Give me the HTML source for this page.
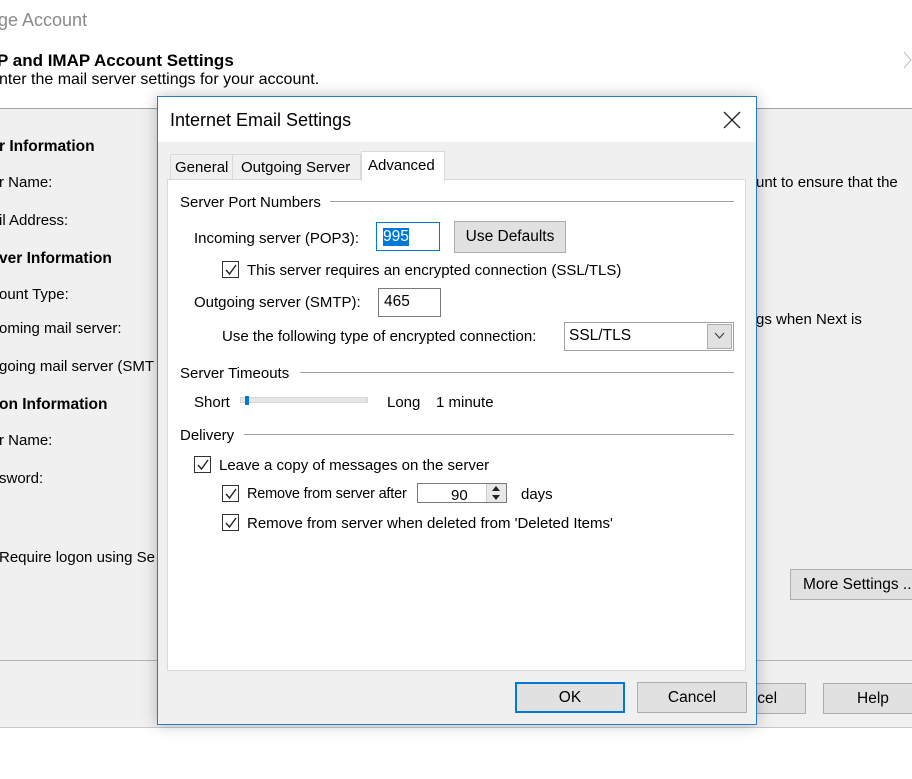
<!DOCTYPE html>
<html><head><meta charset="utf-8"><style>
*{margin:0;padding:0;box-sizing:border-box}
body{width:912px;height:779px;overflow:hidden;background:#fff;font-family:"Liberation Sans",sans-serif;font-size:15px;color:#000;position:relative}
.a{position:absolute;white-space:nowrap}
.b{font-weight:bold}
.btn{position:absolute;background:#e1e1e1;border:1px solid #adadad;text-align:center;font-size:15.5px}
.cb{position:absolute;width:17px;height:17px;border:1px solid #333;background:#fff}
.cb svg{position:absolute;left:1px;top:1px}
.field{position:absolute;background:#fff;border:1px solid #7a7a7a}
.sep{position:absolute;height:1px;background:#a0a0a0}
</style></head><body>
<div class="a" style="left:-2px;top:10px;font-size:18px;color:#8a8a8a">ge Account</div>
<div class="a b" style="left:-3px;top:51px;font-size:17px">P and IMAP Account Settings</div>
<div class="a" style="left:-1px;top:71px;font-size:16px">nter the mail server settings for your account.</div>
<svg class="a" style="left:903px;top:50px" width="9" height="20"><path d="M1 2L8 10L1 18" stroke="#bbb" fill="none"/></svg>
<div style="position:absolute;left:0;top:108px;width:912px;height:620px;background:#f0f0f0;border-top:1px solid #a0a0a0;border-bottom:1px solid #c8c8c8"></div>
<div class="sep" style="left:0;top:660px;width:912px;background:#b4b4b4"></div>
<div class="a b" style="left:-1px;top:138px;font-size:15.5px">r Information</div>
<div class="a" style="left:-1px;top:174px">r Name:</div>
<div class="a" style="left:-1px;top:212px">il Address:</div>
<div class="a b" style="left:-1px;top:250px;font-size:15.5px">ver Information</div>
<div class="a" style="left:-1px;top:286px">ount Type:</div>
<div class="a" style="left:-1px;top:320px">oming mail server:</div>
<div class="a" style="left:-1px;top:358px">going mail server (SMT</div>
<div class="a b" style="left:-1px;top:396px;font-size:15.5px">on Information</div>
<div class="a" style="left:-1px;top:432px">r Name:</div>
<div class="a" style="left:-1px;top:470px">sword:</div>
<div class="a" style="left:-1px;top:549px">Require logon using Se</div>
<div class="a" style="left:756px;top:174px">unt to ensure that the</div>
<div class="a" style="left:756px;top:311px">gs when Next is</div>
<div class="btn" style="left:790px;top:569px;width:130px;height:31px;line-height:29px;text-align:left;padding-left:12px">More Settings ...</div>
<div class="btn" style="left:700px;top:683px;width:106px;height:31px;line-height:29px">Cancel</div>
<div class="btn" style="left:823px;top:683px;width:100px;height:31px;line-height:29px">Help</div>

<div style="position:absolute;left:157px;top:96px;width:600px;height:629px;background:#f0f0f0;border:1px solid #2b79c2;box-shadow:0 0 14px rgba(0,0,0,.25)">
 <div style="position:absolute;left:0;top:0;width:598px;height:45px;background:#fff"></div>
 <div class="a" style="left:12px;top:13px;font-size:18px">Internet Email Settings</div>
 <svg class="a" style="left:565px;top:14px" width="18" height="18"><path d="M1 1L17 17M17 1L1 17" stroke="#222" stroke-width="1.3"/></svg>
 <div class="a" style="left:12px;top:57px;width:63px;height:27px;border:1px solid #d9d9d9;border-bottom:none;background:#f0f0f0"></div>
 <div class="a" style="left:75px;top:57px;width:128px;height:27px;border:1px solid #d9d9d9;border-left:none;border-bottom:none;background:#f0f0f0"></div>
 <div class="a" style="left:17px;top:62px;font-size:15px">General</div>
 <div class="a" style="left:83px;top:62px;font-size:15px">Outgoing Server</div>
 <div style="position:absolute;left:9px;top:82px;width:579px;height:492px;background:#fff;border:1px solid #d9d9d9"></div>
 <div class="a" style="left:203px;top:54px;width:84px;height:30px;background:#fff;border:1px solid #d9d9d9;border-bottom:none"></div>
 <div class="a" style="left:210px;top:60px;font-size:15px">Advanced</div>

 <div class="a" style="left:22px;top:97px">Server Port Numbers</div>
 <div class="sep" style="left:172px;top:104px;width:404px"></div>
 <div class="a" style="left:36px;top:133px">Incoming server (POP3):</div>
 <div class="field" style="left:218px;top:125px;width:64px;height:29px;border:1px solid #0078d7"></div>
 <div class="a" style="left:225px;top:131px;background:#0078d7;color:#fff;font-size:15.5px;line-height:18px">995</div>
 <div class="btn" style="left:296px;top:124px;width:112px;height:32px;line-height:30px">Use Defaults</div>
 <div class="cb" style="left:64px;top:164px"><svg width="14" height="14"><path d="M2 7L5.5 11L12 2" stroke="#222" stroke-width="1.4" fill="none"/></svg></div>
 <div class="a" style="left:89px;top:165px">This server requires an encrypted connection (SSL/TLS)</div>
 <div class="a" style="left:36px;top:197px">Outgoing server (SMTP):</div>
 <div class="field" style="left:220px;top:191px;width:63px;height:29px"></div>
 <div class="a" style="left:226px;top:196px;font-size:15.5px">465</div>
 <div class="a" style="left:64px;top:231px">Use the following type of encrypted connection:</div>
 <div class="field" style="left:406px;top:225px;width:170px;height:29px;border-color:#a0a0a0"></div>
 <div class="a" style="left:411px;top:230px;font-size:15.5px">SSL/TLS</div>
 <div class="a" style="left:549px;top:227px;width:25px;height:25px;background:#e1e1e1;border:1px solid #adadad"></div>
 <svg class="a" style="left:556px;top:235px" width="11" height="8"><path d="M1 1L5.5 6L10 1" stroke="#333" fill="none"/></svg>

 <div class="a" style="left:22px;top:268px">Server Timeouts</div>
 <div class="sep" style="left:142px;top:275px;width:434px"></div>
 <div class="a" style="left:36px;top:297px">Short</div>
 <div class="a" style="left:82px;top:300px;width:128px;height:6px;background:#e6e6e6;border:1px solid #d6d6d6"></div>
 <div class="a" style="left:87px;top:299px;width:4px;height:9px;background:#0078d7"></div>
 <div class="a" style="left:229px;top:297px">Long</div>
 <div class="a" style="left:278px;top:297px">1 minute</div>

 <div class="a" style="left:22px;top:330px">Delivery</div>
 <div class="sep" style="left:86px;top:337px;width:490px"></div>
 <div class="cb" style="left:36px;top:359px"><svg width="14" height="14"><path d="M2 7L5.5 11L12 2" stroke="#222" stroke-width="1.4" fill="none"/></svg></div>
 <div class="a" style="left:61px;top:360px">Leave a copy of messages on the server</div>
 <div class="cb" style="left:64px;top:388px"><svg width="14" height="14"><path d="M2 7L5.5 11L12 2" stroke="#222" stroke-width="1.4" fill="none"/></svg></div>
 <div class="a" style="left:89px;top:389px;font-size:14.5px;letter-spacing:-0.2px">Remove from server after</div>
 <div class="field" style="left:259px;top:386px;width:90px;height:20px"></div>
 <div class="a" style="left:328px;top:387px;width:20px;height:18px;background:#e8e8e8;border-left:1px solid #ccc"></div>
 <svg class="a" style="left:332px;top:388px" width="12" height="16"><path d="M6 1L10 6H2Z M6 15L10 10H2Z" fill="#222"/></svg>
 <div class="a" style="left:293px;top:390px;font-size:15px">90</div>
 <div class="a" style="left:363px;top:389px">days</div>
 <div class="cb" style="left:64px;top:417px"><svg width="14" height="14"><path d="M2 7L5.5 11L12 2" stroke="#222" stroke-width="1.4" fill="none"/></svg></div>
 <div class="a" style="left:89px;top:418px">Remove from server when deleted from 'Deleted Items'</div>

 <div class="btn" style="left:357px;top:585px;width:110px;height:31px;line-height:27px;border:2px solid #0078d7">OK</div>
 <div class="btn" style="left:479px;top:585px;width:110px;height:31px;line-height:29px">Cancel</div>
</div>
</body></html>
